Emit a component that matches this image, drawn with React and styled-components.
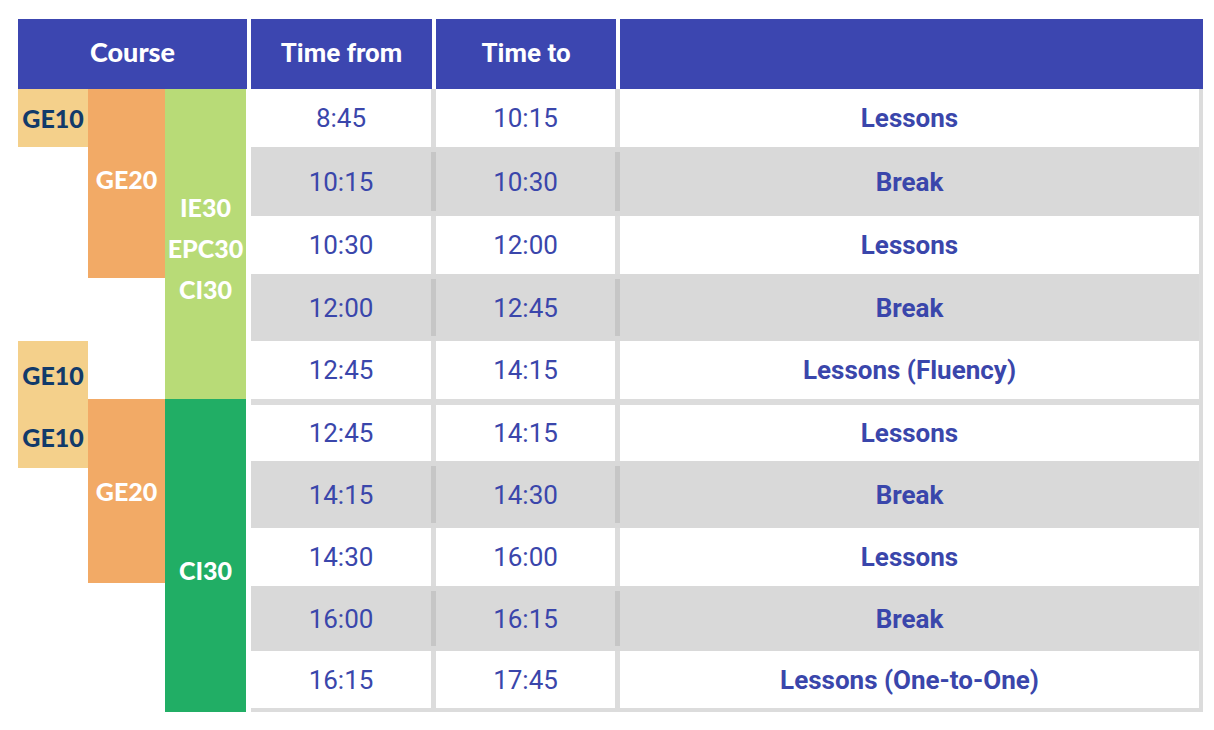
import styled, { createGlobalStyle, css } from 'styled-components';

const GlobalStyle = createGlobalStyle`
  html, body {
    margin: 0;
    background: #fff;
  }
  body {
    font-family: Roboto, "Liberation Sans", sans-serif;
  }
`;

// course blocks: lane -> stacked blocks (height in px), spacers keep the gaps
const lanes = [
  {
    width: 70,
    items: [
      { h: 58, tone: 'ge10', labels: ['GE10'] },
      { h: 194 },
      { h: 127, tone: 'ge10', labels: ['GE10', 'GE10'], split: true },
    ],
  },
  {
    width: 77,
    items: [
      { h: 189, tone: 'ge20', labels: ['GE20'], shift: -9 },
      { h: 121 },
      { h: 184, tone: 'ge20', labels: ['GE20'] },
    ],
  },
  {
    width: 81,
    items: [
      { h: 310, tone: 'lime', labels: ['IE30', 'EPC30', 'CI30'], shift: 8 },
      { h: 313, tone: 'green', labels: ['CI30'], shift: 30 },
    ],
  },
];

const rows = [
  { from: '8:45', to: '10:15', what: 'Lessons', h: 58 },
  { from: '10:15', to: '10:30', what: 'Break', h: 69, shaded: true },
  { from: '10:30', to: '12:00', what: 'Lessons', h: 58 },
  { from: '12:00', to: '12:45', what: 'Break', h: 67, shaded: true },
  { from: '12:45', to: '14:15', what: 'Lessons (Fluency)', h: 58, divider: true },
  { from: '12:45', to: '14:15', what: 'Lessons', h: 56 },
  { from: '14:15', to: '14:30', what: 'Break', h: 67, shaded: true },
  { from: '14:30', to: '16:00', what: 'Lessons', h: 58 },
  { from: '16:00', to: '16:15', what: 'Break', h: 65, shaded: true },
  { from: '16:15', to: '17:45', what: 'Lessons (One-to-One)', h: 57 },
];

const tones = {
  ge10: { bg: '#f4d08b', fg: '#113a6a' },
  ge20: { bg: '#f2aa66', fg: '#ffffff' },
  lime: { bg: '#b8db77', fg: '#ffffff' },
  green: { bg: '#21ae65', fg: '#ffffff' },
};

const Page = styled.div`
  padding: 19px 0 0 18px;
`;

const Timetable = styled.div`
  width: 1185px;
`;

const HeadRow = styled.div`
  display: grid;
  grid-template-columns: 229px 181px 180px 583px;
  column-gap: 4px;
  height: 70px;
`;

const HeadCell = styled.div`
  background: #3c46b0;
  color: #fff;
  display: flex;
  align-items: center;
  justify-content: center;
  font-family: Roboto, "Liberation Sans", sans-serif;
  font-weight: 700;
  font-size: 26px;
  padding-bottom: 2px;

  ${(p) => p.$course && css`
    font-family: Lato, "Liberation Sans", sans-serif;
    font-weight: 900;
    font-size: 27px;
    padding-bottom: 5px;
  `}
`;

const Body = styled.div`
  display: flex;
  gap: 5px;
`;

const Courses = styled.div`
  display: flex;
  width: 228px;
  flex-shrink: 0;
`;

const Lane = styled.div`
  display: flex;
  flex-direction: column;
  width: ${(p) => p.$w}px;
`;

const Spacer = styled.div`
  height: ${(p) => p.$h}px;
`;

const CourseBlock = styled.div`
  height: ${(p) => p.$h}px;
  background: ${(p) => tones[p.$tone].bg};
  color: ${(p) => tones[p.$tone].fg};
  display: flex;
  flex-direction: column;
  align-items: center;
  justify-content: center;
  font-family: Lato, "Liberation Sans", sans-serif;
  font-weight: 900;
  font-size: 25px;
  line-height: 41px;
  padding-top: ${(p) => Math.max(p.$shift || 0, 0)}px;
  padding-bottom: ${(p) => Math.max(-(p.$shift || 0), 0)}px;
  box-sizing: border-box;

  ${(p) => p.$split && css`
    justify-content: stretch;
    padding-top: 4px;
  `}
`;

const CourseLabel = styled.span`
  ${(p) => p.$split && css`
    flex: 1;
    display: flex;
    align-items: center;
  `}
`;

const Schedule = styled.div`
  width: 952px;
  border-bottom: 4px solid #dcdcdc;
`;

const Row = styled.div`
  display: grid;
  grid-template-columns: 180px 5px 179px 5px 1fr 4px;
  height: ${(p) => p.$h}px;
  background: ${(p) => (p.$shaded ? '#d9d9d9' : '#ffffff')};
  ${(p) => p.$divider && css`
    border-bottom: 6px solid #dcdcdc;
    box-sizing: content-box;
  `}
`;

const Cell = styled.div`
  display: flex;
  align-items: center;
  justify-content: center;
  color: #3a46ab;
  font-size: 26px;
  font-weight: ${(p) => (p.$strong ? 700 : 400)};
  white-space: nowrap;
`;

const Sep = styled.div`
  background: #dcdcdc;

  ${(p) => p.$shaded && css`
    background: #c6c6c6;
    background-clip: content-box;
    padding: 5px 0;
  `}
`;

const Edge = styled.div`
  background: #dcdcdc;
`;

export default function App() {
  return (
    <>
      <GlobalStyle />
      <Page>
        <Timetable>
          <HeadRow>
            <HeadCell $course>Course</HeadCell>
            <HeadCell>Time from</HeadCell>
            <HeadCell>Time to</HeadCell>
            <HeadCell />
          </HeadRow>
          <Body>
            <Courses>
              {lanes.map((lane, i) => (
                <Lane key={i} $w={lane.width}>
                  {lane.items.map((item, j) =>
                    item.tone ? (
                      <CourseBlock key={j} $h={item.h} $tone={item.tone} $shift={item.shift} $split={item.split}>
                        {item.labels.map((label, k) => (
                          <CourseLabel key={k} $split={item.split}>{label}</CourseLabel>
                        ))}
                      </CourseBlock>
                    ) : (
                      <Spacer key={j} $h={item.h} />
                    )
                  )}
                </Lane>
              ))}
            </Courses>
            <Schedule>
              {rows.map((row, i) => (
                <Row key={i} $h={row.h} $shaded={row.shaded} $divider={row.divider}>
                  <Cell>{row.from}</Cell>
                  <Sep $shaded={row.shaded} />
                  <Cell>{row.to}</Cell>
                  <Sep $shaded={row.shaded} />
                  <Cell $strong>{row.what}</Cell>
                  <Edge />
                </Row>
              ))}
            </Schedule>
          </Body>
        </Timetable>
      </Page>
    </>
  );
}
